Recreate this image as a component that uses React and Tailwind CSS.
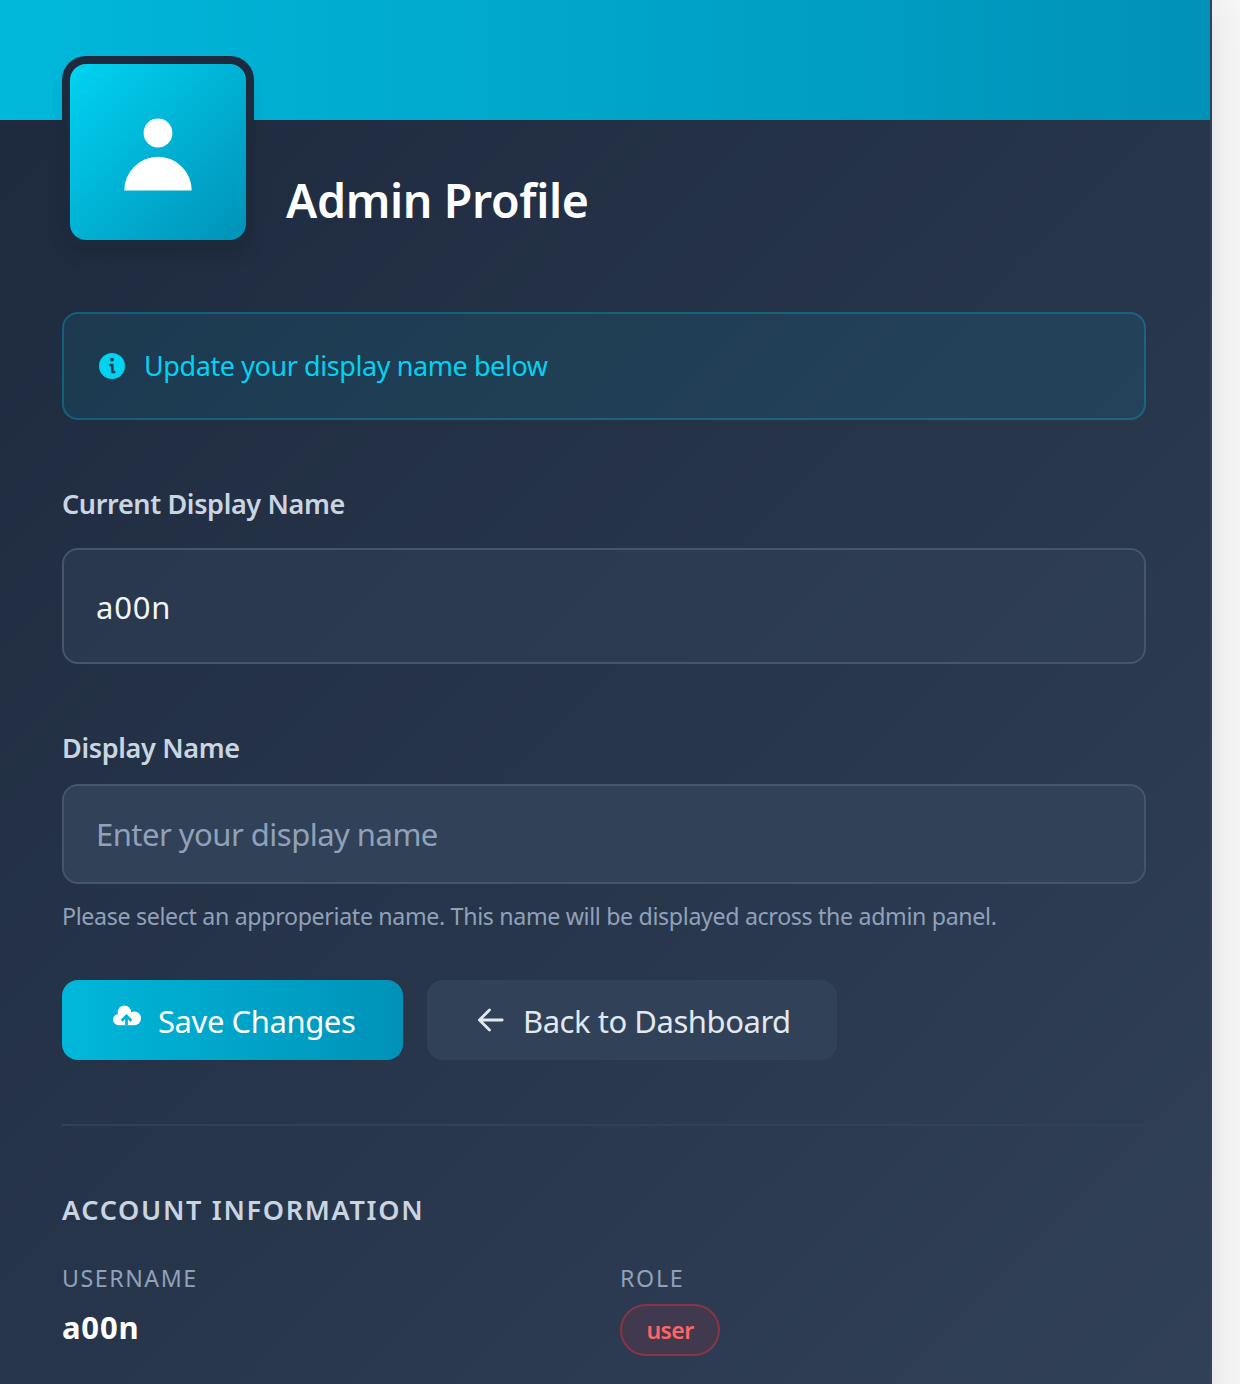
import React from "react";

const FONT = "font-['Noto_Sans','Open_Sans',sans-serif]";

function PersonIcon() {
  return (
    <svg width="96" height="96" viewBox="0 0 96 96" fill="white">
      <circle cx="48" cy="29" r="14.4" />
      <path d="M14.3 86.5a33.7 33.7 0 0 1 67.4 0z" />
    </svg>
  );
}

function InfoIcon() {
  return (
    <svg width="28" height="28" viewBox="0 0 28 28" fill="none">
      <circle cx="14" cy="14" r="13" fill="#00d3f2" />
      <circle cx="14" cy="7.7" r="1.9" fill="#213c52" />
      <path d="M12.2 13h2.1v7h1.8" stroke="#213c52" strokeWidth="2.7" strokeLinecap="round" strokeLinejoin="round" />
    </svg>
  );
}

function CloudIcon() {
  return (
    <svg className="-mt-0.5" width="28" height="28" viewBox="0 0 28 28" fill="none">
      <circle cx="5.6" cy="14.6" r="5.6" fill="white" />
      <circle cx="11.4" cy="7.2" r="6.7" fill="white" />
      <circle cx="21.2" cy="13.4" r="6.8" fill="white" />
      <path d="M5.6 9h15v11.2h-15z" fill="white" />
      <path d="M13.5 20.6v-7.5M8.6 15.8l4.9-4.9 4.9 4.9" stroke="#00b2d5" strokeWidth="2.7" />
    </svg>
  );
}

function ArrowIcon() {
  return (
    <svg width="28" height="28" viewBox="0 0 28 28" fill="none" stroke="#e2e8f0" strokeWidth="2.8" strokeLinecap="round" strokeLinejoin="round">
      <path d="M12.5 4 2.4 14l10.1 10M2.8 14h22.4" />
    </svg>
  );
}

export default function App() {
  return (
    <div className={`h-[1384px] w-[1240px] overflow-hidden bg-[#f8f8f8] ${FONT}`}>
      <div className="h-[1440px] w-[1212px] border-r-2 border-[#314158] bg-linear-135 from-[#1d293d] to-[#314158] shadow-[0_0_50px_rgba(0,0,0,0.11)]">
        <div className="h-[120px] bg-linear-to-r from-[#00b8db] to-[#0092b8]" />
        <main className="-mt-16 pr-16 pl-[62px]">
          <div className="flex h-48 gap-8">
            <div className="size-48 shrink-0 rounded-3xl bg-[#1d293d] p-2 shadow-[0_12px_18px_-4px_rgba(0,0,0,0.12)]">
              <div className="flex size-44 items-center justify-center rounded-2xl bg-linear-135 from-[#00d3f2] to-[#0092b8]">
                <PersonIcon />
              </div>
            </div>
            <h1 className="mt-[112px] text-[46.5px] leading-[64px] font-semibold tracking-[-0.35px] whitespace-nowrap text-white">Admin Profile</h1>
          </div>

          <div className="mt-16 flex h-[108px] items-center gap-[18px] rounded-2xl border-2 border-[#00b8db]/30 bg-[#00b8db]/10 px-[34px] text-[27px] tracking-[-0.42px] text-[#00d3f2]">
            <InfoIcon />
            <span>Update your display name below</span>
          </div>

          <div className="mt-16 h-10 text-[27px] leading-10 font-semibold tracking-[-0.36px] text-[#cad5e2]">Current Display Name</div>
          <div className="mt-6 flex h-[116px] items-center rounded-2xl border-2 border-[#45556c] bg-[#314158]/50 px-8 pt-0.5 text-[31px] tracking-[0.8px] text-[#f1f5f9]">a00n</div>

          <label htmlFor="name" className="mt-16 block h-10 text-[27px] leading-10 font-semibold tracking-[-0.33px] text-[#cad5e2]">Display Name</label>
          <input
            id="name"
            placeholder="Enter your display name"
            className="mt-4 block h-[100px] w-full rounded-2xl border-2 border-[#45556c] bg-[#314158] px-8 text-[31px] tracking-[-0.52px] text-white outline-none placeholder:text-[#90a1b9]"
          />
          <p className="mt-4 h-8 text-[23.2px] leading-8 tracking-[-0.34px] whitespace-nowrap text-[#90a1b9]">
            Please select an approperiate name. This name will be displayed across the admin panel.
          </p>

          <div className="mt-12 flex gap-6 text-[31px]">
            <button className="flex h-20 w-[341px] items-center rounded-2xl bg-linear-to-r from-[#00b8db] to-[#0092b8] pl-[51px] tracking-[-0.42px] text-white">
              <CloudIcon />
              <span className="ml-[17px] pt-0.5 whitespace-nowrap">Save Changes</span>
            </button>
            <button className="flex h-20 w-[410px] items-center rounded-2xl bg-[#314158] pl-[50px] tracking-[-0.46px] text-[#e2e8f0]">
              <ArrowIcon />
              <span className="ml-[18px] pt-0.5 whitespace-nowrap">Back to Dashboard</span>
            </button>
          </div>

          <section className="mt-16 border-t-2 border-[#314158] pt-16">
            <h2 className="h-10 text-[27px] leading-10 font-semibold tracking-[1.7px] text-[#cad5e2]">ACCOUNT INFORMATION</h2>
            <div className="mt-8 grid grid-cols-2 gap-8">
              <div>
                <div className="h-8 text-[23.2px] leading-8 tracking-[1.55px] text-[#90a1b9]">USERNAME</div>
                <div className="mt-2 h-12 pt-px text-[31px] leading-[48px] font-bold tracking-[0.8px] text-white">a00n</div>
              </div>
              <div>
                <div className="h-8 text-[23.2px] leading-8 tracking-[1.7px] text-[#90a1b9]">ROLE</div>
                <div className="mt-[10px] flex h-[52px] w-[100px] items-center justify-center rounded-full border-2 border-[#fb2c36]/40 bg-[#fb2c36]/10 text-[23px] font-semibold tracking-[-0.6px] text-[#ff6467]">user</div>
              </div>
            </div>
          </section>
        </main>
      </div>
    </div>
  );
}
